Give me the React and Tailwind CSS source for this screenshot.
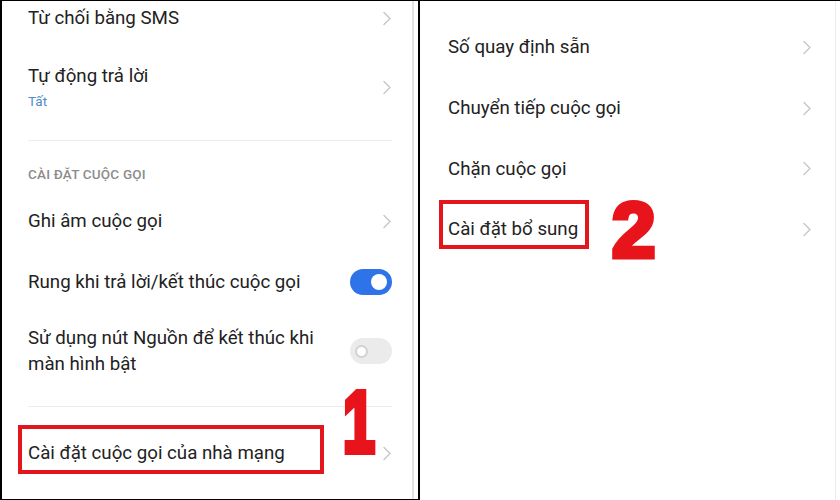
import React from "react";

const Chevron = () => (
  <svg width="10" height="15" viewBox="0 0 10 15" className="shrink-0">
    <polyline
      points="2,1.5 8,7.5 2,13.5"
      fill="none"
      stroke="#c9c9c9"
      strokeWidth="1.5"
      strokeLinecap="round"
      strokeLinejoin="round"
    />
  </svg>
);

const ToggleOn = () => (
  <div className="flex h-[26px] w-[42px] shrink-0 items-center justify-end rounded-full bg-[#2f73e8] pr-[5px]">
    <div className="h-4 w-4 rounded-full bg-white" />
  </div>
);

const ToggleOff = () => (
  <div className="flex h-[26px] w-[42px] shrink-0 items-center rounded-full bg-[#ebebeb] pl-[5px]">
    <div className="h-[13px] w-[13px] rounded-full border-2 border-[#d2d2d2] bg-white" />
  </div>
);

export default function App() {
  return (
    <div
      className="relative flex h-[500px] w-[840px] bg-white text-[#222222]"
      style={{ fontFamily: "Roboto, 'Noto Sans', sans-serif" }}
    >
      {/* Left panel */}
      <div className="flex h-[500px] w-[418px] border-l-2 border-t border-b border-black">
        <div className="flex flex-1 flex-col pl-[26px] pr-[20px]">
          <div className="flex h-[34px] items-center justify-between">
            <span className="text-[18.7px] leading-6">Từ chối bằng SMS</span>
            <Chevron />
          </div>
          <div className="flex items-center justify-between pt-[29px] pb-[30px]">
            <div className="flex flex-col gap-1">
              <span className="text-[18.7px] leading-6">Tự động trả lời</span>
              <span className="text-[13.5px] leading-[18px] text-[#4f8cc9]">Tất</span>
            </div>
            <Chevron />
          </div>
          <div className="h-px bg-[#ececec]" />
          <div className="mt-[25px] text-[13.5px] font-medium leading-4 tracking-[0.2px] text-[#8c8c8c]">
            CÀI ĐẶT CUỘC GỌI
          </div>
          <div className="mt-[9px] flex h-[60px] items-center justify-between">
            <span className="text-[18.7px] leading-6">Ghi âm cuộc gọi</span>
            <Chevron />
          </div>
          <div className="flex h-[62px] items-center justify-between">
            <span className="text-[18.7px] leading-6">Rung khi trả lời/kết thúc cuộc gọi</span>
            <ToggleOn />
          </div>
          <div className="flex h-[76px] items-center justify-between">
            <span className="text-[18.7px] leading-[26px]">
              Sử dụng nút Nguồn để kết thúc khi
              <br />
              màn hình bật
            </span>
            <ToggleOff />
          </div>
          <div className="mt-[17px] h-px bg-[#ececec]" />
          <div className="mt-4 flex h-[60px] items-center justify-between">
            <span className="text-[18.7px] leading-6">Cài đặt cuộc gọi của nhà mạng</span>
            <Chevron />
          </div>
        </div>
        <div className="w-[2px] bg-[#e2e2e2]" />
        <div className="w-1" />
      </div>

      {/* Right panel */}
      <div className="flex h-[500px] flex-1 border-l-2 border-t border-black">
        <div className="flex flex-1 flex-col pl-[28px] pr-[23px] pt-4">
          {["Số quay định sẵn", "Chuyển tiếp cuộc gọi", "Chặn cuộc gọi", "Cài đặt bổ sung"].map((t) => (
            <div key={t} className="flex h-[60.7px] items-center justify-between">
              <span className="text-[18.7px] leading-6">{t}</span>
              <Chevron />
            </div>
          ))}
        </div>
        <div className="w-px bg-[#ececec]" />
        <div className="w-1" />
      </div>

      {/* Annotations */}
      <div className="pointer-events-none absolute left-[18px] top-[425px] h-[49px] w-[306px] border-4 border-[#e3161d]" />
      <div className="pointer-events-none absolute left-[439px] top-[200px] h-[49px] w-[150px] border-4 border-[#e3161d]" />
      <div
        className="pointer-events-none absolute left-[343px] top-[378px] origin-left scale-x-[0.66] text-[87px] font-bold leading-none text-[#e8141b] [-webkit-text-stroke:6px_#e8141b]"
        style={{ fontFamily: "'Liberation Sans', Arial, sans-serif" }}
      >
        1
      </div>
      <div
        className="pointer-events-none absolute left-[612px] top-[191px] text-[78px] font-bold leading-none text-[#e8141b] [-webkit-text-stroke:5px_#e8141b]"
        style={{ fontFamily: "'Liberation Sans', Arial, sans-serif" }}
      >
        2
      </div>
    </div>
  );
}
